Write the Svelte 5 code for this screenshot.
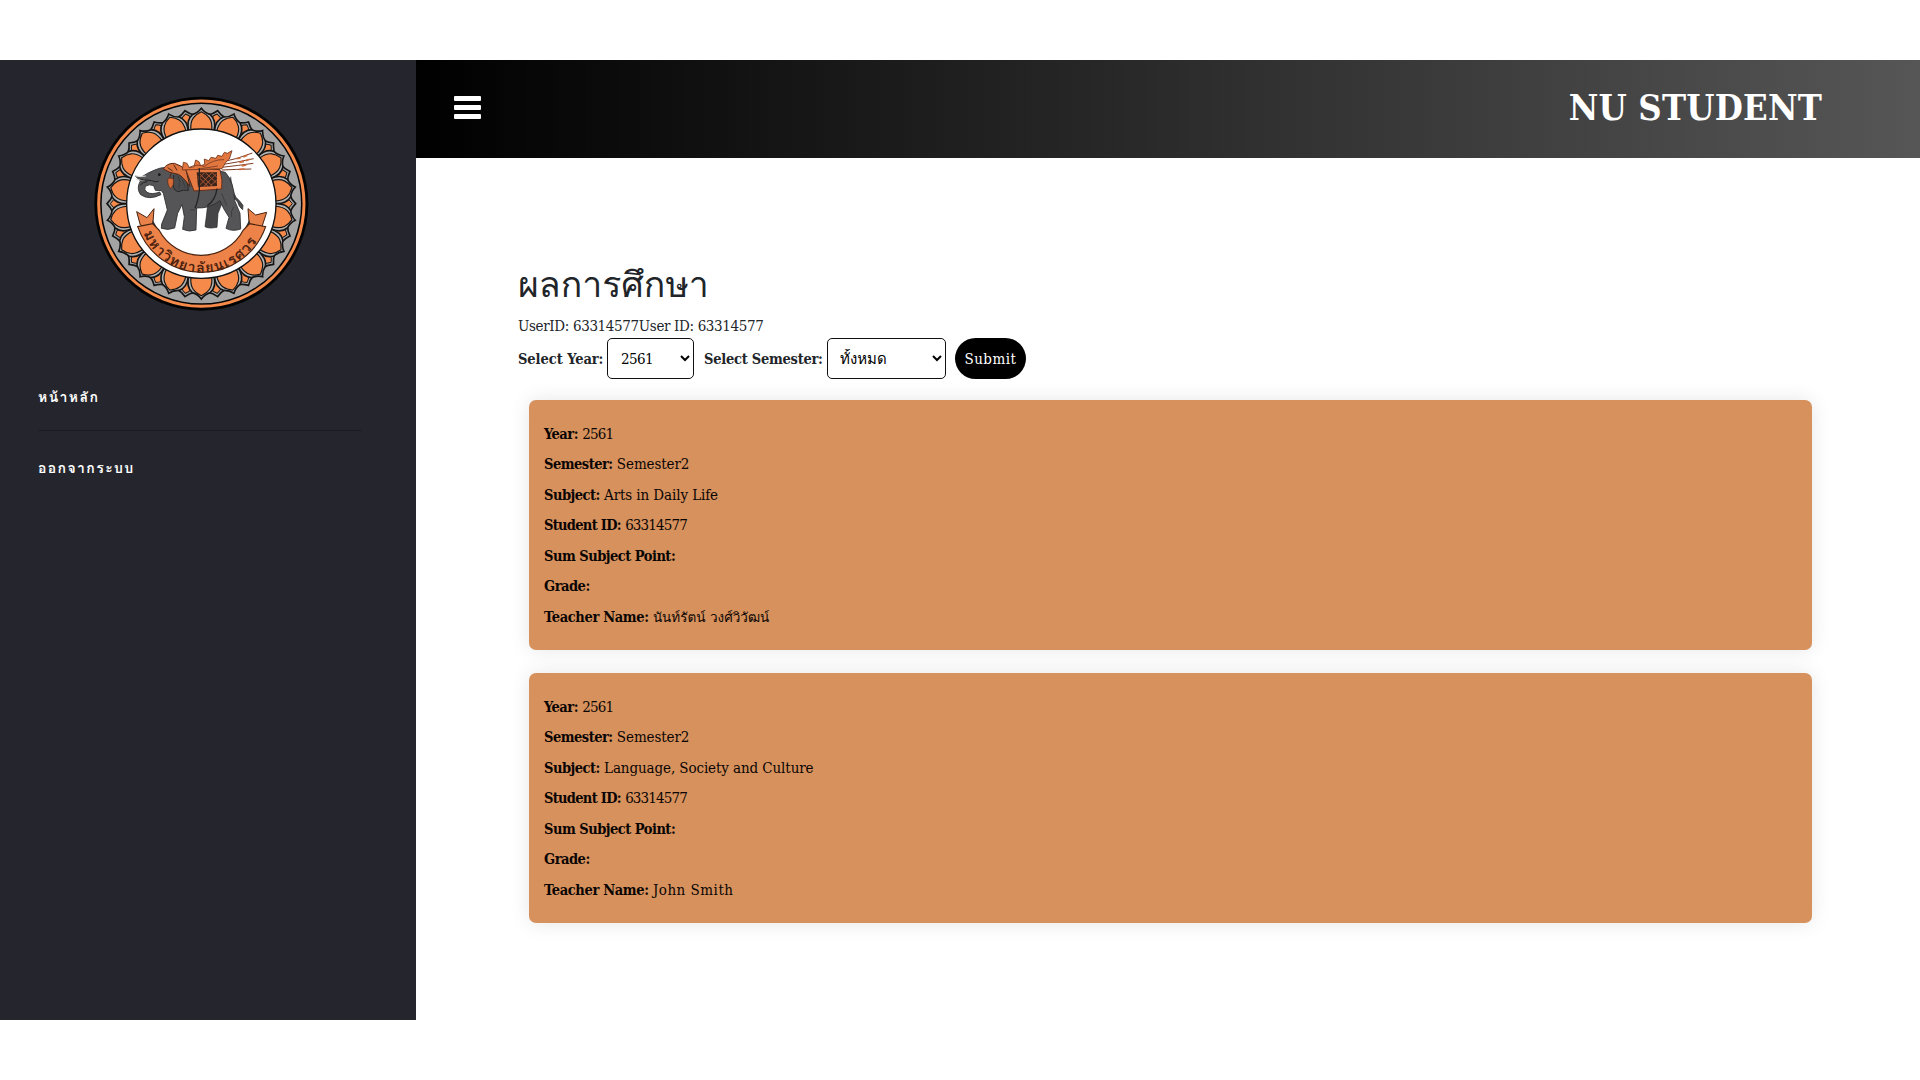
<script>
  const menu = ['หน้าหลัก', 'ออกจากระบบ'];
  const records = [
    { subject: 'Arts in Daily Life', teacher: 'นันท์รัตน์ วงศ์วิวัฒน์', thai: true },
    { subject: 'Language, Society and Culture', teacher: 'John Smith', thai: false }
  ];
  const petals = Array.from({ length: 18 }, (_, i) => i * 20);
</script>

<div class="page">
  <aside>
    <svg class="seal" viewBox="0 0 720 720" aria-label="University seal">
      <defs>
        <path id="motto" d="M187 450A189 189 0 0 0 545 450" />
      </defs>
      <circle cx="364" cy="371" r="321" fill="#030303" />
      <circle cx="364" cy="371" r="308" fill="none" stroke="#f58a4b" stroke-width="9" />
      <circle cx="364" cy="371" r="299" fill="#a3a3a3" />
      {#each petals as a}
        <g transform="rotate({a + 10} 364 371)">
          <path d="M364 88Q351 101 338 105Q326 125 345 150H383Q402 125 390 105Q377 101 364 88Z" fill="#a3a3a3" stroke="#141414" stroke-width="5" />
          <path d="M364 98Q347 108 346 122L356 146H372L382 122Q381 108 364 98Z" fill="#f58a4b" stroke="#141414" stroke-width="3" />
        </g>
      {/each}
      {#each petals as a}
        <g transform="rotate({a} 364 371)">
          <path d="M364 85Q354 99 337 104Q318 121 326 153H402Q410 121 391 104Q374 99 364 85Z" fill="#b2b2b2" stroke="#141414" stroke-width="5" />
          <path d="M364 95C345 104 329 117 333 151H395C399 117 383 104 364 95Z" fill="#f58a4b" stroke="#141414" stroke-width="3.5" />
        </g>
      {/each}
      <circle cx="364" cy="371" r="224" fill="#fff" stroke="#111" stroke-width="4" />

      <!-- arrows carried behind the howdah -->
      <g fill="none" stroke="#7d3e28" stroke-width="3">
        <path d="M425 246Q470 238 517 219M425 254Q470 247 521 236M425 262Q480 256 520 250M425 270Q470 268 514 267" />
        <path d="M470 236l12-2M490 231l12-5M478 247l14-3M497 242l12-4M485 258l14-3M478 268l16-1" stroke="#d06b3c" stroke-width="5" />
      </g>
      <!-- elephant -->
      <path d="M452 290Q455 330 468 352Q479 362 489 376L488 389Q476 381 473 366Q453 349 447 315" fill="#4b4b4d" stroke="#222" stroke-width="2" />
      <path d="M385 355L380 402L375 440Q386 447 411 442L414 400L430 360Z" fill="#454547" stroke="#222" stroke-width="2" />
      <path d="M250 340L262 390L245 432L244 445Q263 452 284 444L293 400L306 374L313 410L308 448Q327 457 348 450L350 384Q388 386 420 362L431 386L447 412L438 445Q458 456 482 447L480 400L464 362Q462 305 436 277Q400 267 310 268L262 262Q240 262 224 270Q203 278 181 293L166 288L181 303Q168 326 182 344Q207 362 243 344L239 336Q216 345 201 337Q191 330 196 319Q207 311 221 317L226 331L244 332Z" fill="#555557" stroke="#2b2b2c" stroke-width="2.5" />
      <path d="M281 285Q273 331 294 335Q312 328 325 331Q323 297 307 275" fill="#4b4b4d" stroke="#28282a" stroke-width="3" />
      <path d="M293 288Q303 302 296 326M307 300L315 322M351 384Q339 395 331 389M425 340L440 377M461 380Q451 395 455 411" fill="none" stroke="#333" stroke-width="2" />
      <path d="M166 288Q185 291 198 288M168 299Q184 301 194 299" fill="none" stroke="#ddd" stroke-width="3" />
      <path d="M181 298L215 302Q225 308 236 304M181 315Q190 305 202 305" fill="none" stroke="#222" stroke-width="3" />
      <circle cx="238" cy="284" r="4" fill="#161616" />
      <!-- harness, saddle cloth and howdah -->
      <path d="M250 267Q261 249 283 250Q305 257 318 270L330 320Q310 291 295 283Q267 279 250 267Z" fill="#dc7440" stroke="#532716" stroke-width="3" />
      <path d="M263 263L278 273M281 254L291 271M273 279Q267 292 273 300" fill="none" stroke="#532716" stroke-width="3" />
      <path d="M263 297Q272 291 281 298Q282 316 273 326Q262 319 263 297Z" fill="#d46b39" stroke="#532716" stroke-width="2" />
      <path d="M317 268L335 264L420 269Q429 300 425 327L342 333Z" fill="#e57a43" stroke="#632d18" stroke-width="3" />
      <path d="M350 277H411V318L354 321Z" fill="#38231d" />
      <path d="M352 288L384 319M355 278L397 318M376 278L410 309M396 278L411 292M352 300L374 278M354 320L396 278M371 320L410 281M391 318L411 299" stroke="#aa5732" stroke-width="3" />
      <path d="M307 270L310 247L321 250L328 263L342 260L347 240L357 245L362 257L374 253L373 237L386 242L393 232L408 235L413 226L426 229L433 217L442 220L456 212L448 237L438 246L426 266L337 269Z" fill="#e1763f" stroke="#733419" stroke-width="2.5" />
      <path d="M326 263Q352 250 373 260Q398 238 432 239M351 268L413 258" fill="none" stroke="#8a4328" stroke-width="3" />
      <path d="M358 265V333Q354 365 345 384M411 326Q406 362 382 377" fill="none" stroke="#242425" stroke-width="4" />
      <!-- ribbon -->
      <path d="M237 453L218 440L222 386L201 413L170 395L181 435Z" fill="#e9824a" stroke="#48220f" stroke-width="3" />
      <path d="M490 453L508 440L504 386L527 405L560 397L546 440Z" fill="#e9824a" stroke="#48220f" stroke-width="3" />
      <path d="M218 420L237 453L215 445ZM508 420L490 453L513 445Z" fill="#292b30" />
      <path d="M173 440L218 431Q226 440 237 450A143 143 0 0 0 490 450Q500 440 509 431L557 440A203 203 0 0 1 173 440Z" fill="#ed8348" stroke="#48220f" stroke-width="3.5" />
      <text class="motto"><textPath href="#motto" startOffset="10" textLength="424" lengthAdjust="spacing">มหาวิทยาลัยนเรศวร</textPath></text>
    </svg>
    <nav>
      {#each menu as item}<a href="#top">{item}</a>{/each}
    </nav>
  </aside>

  <div class="body">
    <header>
      <button class="burger" aria-label="Menu"><i></i><i></i><i></i></button>
      <strong>NU STUDENT</strong>
    </header>
    <main>
      <h1>ผลการศึกษา</h1>
      <div class="user">UserID: 63314577User ID: 63314577</div>
      <form>
        <label for="year">Select Year:</label>
        <select id="year" class="year"><option>2561</option></select>
        <label for="semester" class="second">Select Semester:</label>
        <select id="semester" class="semester"><option>ทั้งหมด</option></select>
        <button type="button" class="submit">Submit</button>
      </form>
      {#each records as r}
        <section>
          <p><b>Year:</b> <span class="num">2561</span></p>
          <p><b>Semester:</b> Semester2</p>
          <p><b>Subject:</b> {r.subject}</p>
          <p><b class="student">Student ID:</b> <span class="num">63314577</span></p>
          <p><b>Sum Subject Point:</b></p>
          <p><b>Grade:</b></p>
          <p><b class="teacher">Teacher Name:</b> <span class={r.thai ? 'thai' : 'latin'}>{r.teacher}</span></p>
        </section>
      {/each}
    </main>
  </div>
</div>

<style>
  :global(body) { margin: 0; background: #fff; }
  * { box-sizing: border-box; }
  .page {
    display: flex; width: 1920px; height: 1080px; padding: 60px 0; overflow: hidden;
    font-family: "Roboto Slab", "DejaVu Serif Condensed", Loma, serif;
    font-size: 15px; color: #212529;
  }
  aside { width: 416px; background: #25262d; padding: 20px 0 0 80px; flex: none; }
  .seal { display: block; width: 240px; height: 240px; }
  .motto { font: 700 43px Loma, sans-serif; fill: #4b2110; }
  nav { margin: 47px 54px 0 -42px; }
  nav a {
    display: block; height: 71px; color: #fff; text-decoration: none;
    font: 700 14px/60px Loma, sans-serif; letter-spacing: 1.4px;
  }
  nav a:first-child { height: 64px; border-bottom: 1px solid #1c1d22; margin-bottom: 7px; }
  .body { flex: 1; min-width: 0; }
  header {
    height: 98px; display: flex; align-items: center; justify-content: space-between;
    padding: 0 98px 0 38px; background: linear-gradient(90deg, #000, #565656);
  }
  .burger { display: grid; gap: 4px; width: 27px; padding: 0; border: 0; background: none; margin-top: -4px; }
  .burger i { display: block; height: 5px; background: #fff; border-radius: 1px; }
  header strong { color: #fff; font-size: 36px; line-height: 50px; letter-spacing: .2px; margin-top: -4px; }
  main { padding: 98px 98px 0 102px; }
  h1 { margin: 0; height: 58px; font: 400 35.6px/58px Loma, sans-serif; }
  .user { height: 24px; line-height: 24px; letter-spacing: -.35px; }
  form { display: flex; align-items: center; height: 41px; }
  label { font-weight: 700; font-size: 14.5px; letter-spacing: -.05px; width: 89px; white-space: nowrap; }
  .second { width: 123px; margin-left: 10px; letter-spacing: -.25px; }
  select {
    height: 41px; border: 1px solid #111; border-radius: 5px; background: #fff; color: #000;
    padding: 8px; font: 15px "DejaVu Serif Condensed", Loma, serif; letter-spacing: -.6px;
  }
  .year { width: 87px; padding-left: 9px; }
  .semester { width: 118.5px; letter-spacing: 0; }
  .submit {
    width: 71px; height: 41px; margin-left: 9.5px; border: 0; border-radius: 21px; padding: 0;
    background: #000; color: #fff; font: 15px "DejaVu Serif Condensed", serif; letter-spacing: .5px;
  }
  section {
    margin: 21px 0 0 11px; width: 1283px; height: 250px; padding: 18.5px 15px; border-radius: 7px;
    background: #d6915d; color: #0a0503; box-shadow: 0 0 20px rgba(0, 0, 0, .1);
  }
  section + section { margin-top: 23px; }
  p { margin: 0; height: 30.6px; line-height: 30.6px; letter-spacing: -.1px; white-space: pre; }
  b { font-size: 14.5px; letter-spacing: -.5px; }
  .student { letter-spacing: -.7px; }
  .teacher { letter-spacing: -.35px; }
  .num { letter-spacing: -.85px; }
  .latin { letter-spacing: .5px; }
  .thai { font: 13.5px Loma, sans-serif; letter-spacing: 0; }
</style>
